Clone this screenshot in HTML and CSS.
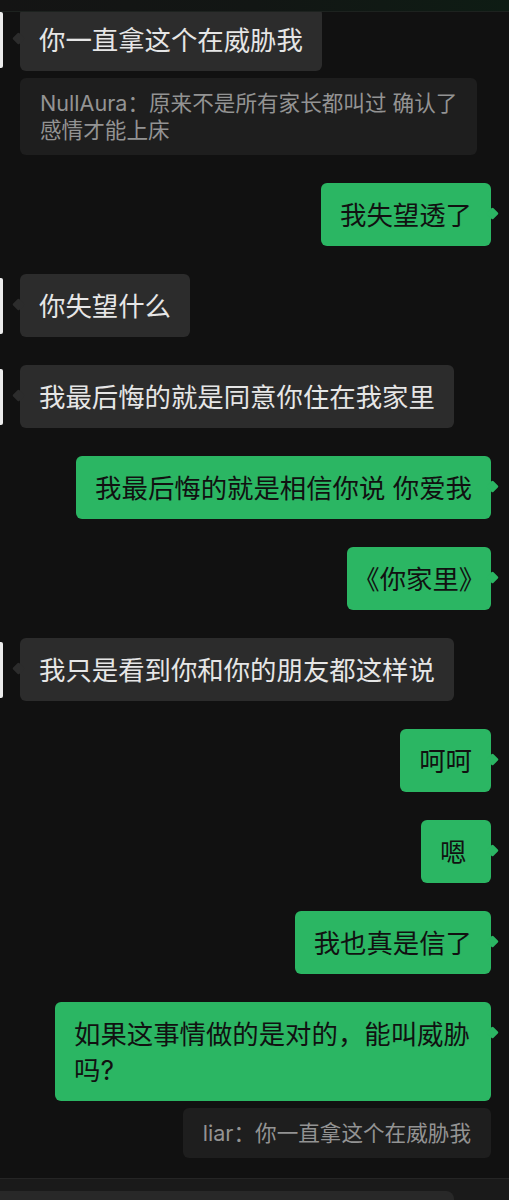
FILE: index.html
```html
<!DOCTYPE html>
<html lang="zh-CN">
<head>
  <meta charset="UTF-8">
  <meta name="viewport" content="width=device-width, initial-scale=1.0">
  <title>聊天记录</title>
  <link rel="stylesheet" href="styles.css">
</head>
<body>

  <div class="top-bar"></div>

  <div class="chat">

    <div class="group left first">
      <div class="msg">
        <span class="avatar"></span>
        <div class="bubble">你一直拿这个在威胁我</div>
      </div>
      <div class="quote">NullAura：原来不是所有家长都叫过 确认了<br>感情才能上床</div>
    </div>

    <div class="group right">
      <div class="msg">
        <div class="bubble">我失望透了</div>
      </div>
    </div>

    <div class="group left">
      <div class="msg">
        <span class="avatar"></span>
        <div class="bubble">你失望什么</div>
      </div>
    </div>

    <div class="group left">
      <div class="msg">
        <span class="avatar"></span>
        <div class="bubble">我最后悔的就是同意你住在我家里</div>
      </div>
    </div>

    <div class="group right">
      <div class="msg">
        <div class="bubble">我最后悔的就是相信你说 你爱我</div>
      </div>
    </div>

    <div class="group right">
      <div class="msg">
        <div class="bubble half-punct">《你家里》</div>
      </div>
    </div>

    <div class="group left">
      <div class="msg">
        <span class="avatar"></span>
        <div class="bubble">我只是看到你和你的朋友都这样说</div>
      </div>
    </div>

    <div class="group right">
      <div class="msg">
        <div class="bubble">呵呵</div>
      </div>
    </div>

    <div class="group right">
      <div class="msg">
        <div class="bubble">嗯</div>
      </div>
    </div>

    <div class="group right">
      <div class="msg">
        <div class="bubble">我也真是信了</div>
      </div>
    </div>

    <div class="group right">
      <div class="msg">
        <div class="bubble">如果这事情做的是对的，能叫威胁吗?</div>
      </div>
      <div class="quote">liar：你一直拿这个在威胁我</div>
    </div>

  </div>

  <div class="input-bar">
    <div class="input-box"></div>
  </div>

</body>
</html>
```

FILE: styles.css
```css
html, body {
  height: 1200px;
  overflow: hidden;
}

body {
  margin: 0;
  background-color: #111111;
  font-family: 'Inter', 'Noto Sans CJK SC', sans-serif;
}

.top-bar {
  height: 11px;
  background: linear-gradient(90deg, #141414 0%, #121614 50%, #0e1c14 100%);
  border-bottom: 1px solid #1d221f;
  position: relative;
  z-index: 2;
}

.chat {
  height: 1166px;
  overflow: hidden;
  display: flex;
  flex-direction: column;
  gap: 28px;
}

.group {
  display: flex;
  flex-direction: column;
  gap: 7px;
}

.group.first {
  margin-top: -4px;
}

.group.left {
  align-items: flex-start;
  padding-left: 20px;
}

.group.right {
  align-items: flex-end;
  padding-right: 18px;
}

.msg {
  position: relative;
  display: flex;
}

/* only the right edge of the avatar is on screen */
.avatar {
  position: absolute;
  left: -20px;
  top: 4px;
  width: 3px;
  height: 56px;
  background-color: #ececec;
  border-radius: 0 2px 2px 0;
}

.bubble {
  position: relative;
  box-sizing: border-box;
  min-width: 70px;
  max-width: 436px;
  padding: 14px 19px 13px;
  border-radius: 6px;
  font-size: 26.4px;
  line-height: 36px;
}

.bubble::before {
  content: "";
  position: absolute;
  top: 25.5px;
  width: 9px;
  height: 9px;
  border-radius: 1.5px;
  transform: rotate(45deg);
}

.left .bubble {
  background-color: #2c2c2c;
  color: #e6e6e6;
}

.left .bubble::before {
  left: -6px;
  background-color: #2c2c2c;
}

.right .bubble {
  background-color: #2bb663;
  color: #111111;
}

.right .bubble::before {
  right: -6px;
  background-color: #2bb663;
}

.half-punct {
  font-feature-settings: "halt";
}

.quote {
  max-width: 470px;
  padding: 12px 20px 11px;
  border-radius: 6px;
  background-color: #1e1e1e;
  color: #939393;
  font-size: 21.6px;
  line-height: 27px;
}

.input-bar {
  background-color: #1a1a1a;
  border-top: 1px solid #252525;
  padding: 12px 55px 0 0;
}

.input-box {
  height: 40px;
  margin-left: -10px;
  background-color: #282828;
  border-radius: 8px;
}
```
